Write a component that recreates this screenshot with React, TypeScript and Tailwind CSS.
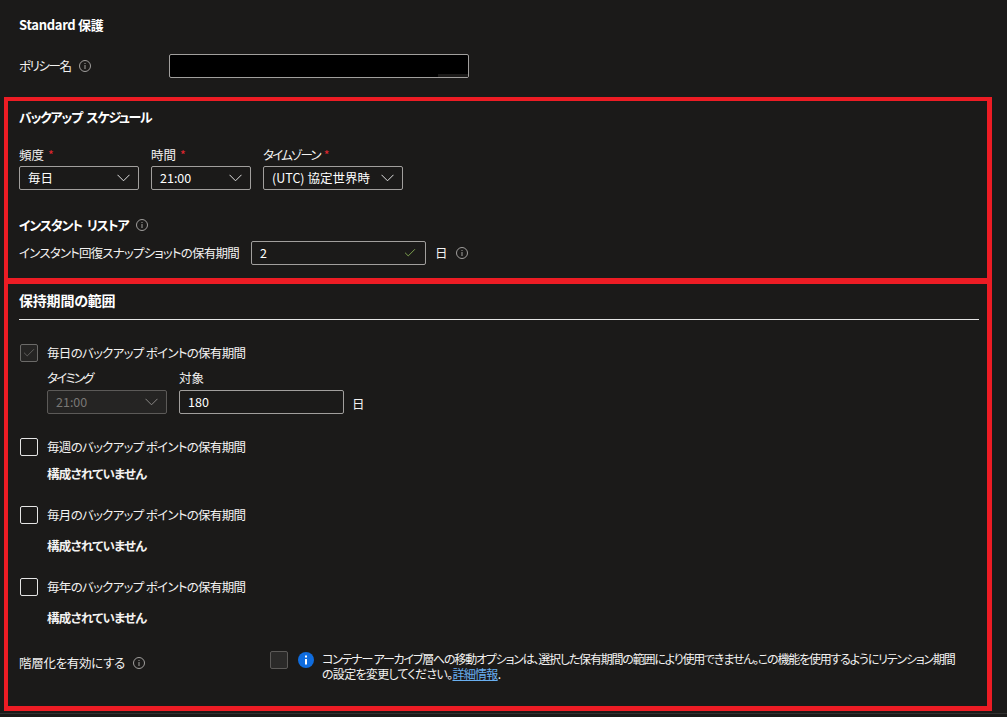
import { Check } from "lucide-react";
import type { ReactNode } from "react";

const InfoIcon = () => (
  <svg width="12" height="12" viewBox="0 0 12 12" fill="none" className="shrink-0 text-[#a19f9d]">
    <circle cx="6" cy="6" r="5.5" stroke="currentColor" />
    <rect x="5.5" y="5" width="1" height="4" fill="currentColor" />
    <rect x="5.5" y="3" width="1" height="1" fill="currentColor" />
  </svg>
);

const Chevron = ({ disabled }: { disabled?: boolean }) => (
  <svg width="13" height="8" viewBox="0 0 13 8" fill="none" className={disabled ? "text-[#8a8886]" : "text-[#e0e0e0]"}>
    <path d="M0.5 0.8 L6.5 6.8 L12.5 0.8" stroke="currentColor" />
  </svg>
);

const Req = () => <span className="ml-1 tracking-normal text-[#e0262f]">*</span>;

const Select = ({ value, width, disabled }: { value: string; width: string; disabled?: boolean }) => (
  <div
    className={`flex h-6 items-center justify-between rounded-[2px] border pr-[8px] pl-2 ${width} ${
      disabled ? "border-[#5c5a58] bg-[#252423] text-[#797775]" : "border-[#a19f9d] text-white"
    }`}
  >
    <span className="whitespace-nowrap">{value}</span>
    <Chevron disabled={disabled} />
  </div>
);

const Title = ({ children, className }: { children: ReactNode; className: string }) => (
  <h2 className={`leading-5 font-bold whitespace-nowrap text-white ${className}`}>{children}</h2>
);

const RetentionRow = ({ label, gap }: { label: string; gap: string }) => (
  <div className="mt-6">
    <div className="ml-[1px] flex items-center gap-[9px]">
      <div className="h-[18px] w-[18px] rounded-[2px] border border-[#e5e5e5]" />
      <span className="tracking-[-0.7px]">{label}</span>
    </div>
    <p className={`ml-[28px] leading-4 font-bold tracking-[-0.7px] ${gap}`}>構成されていません</p>
  </div>
);

export default function App() {
  return (
    <div className="h-[717px] w-[1007px] overflow-hidden bg-[#1b1a19] text-[12.5px] leading-4 text-[#f3f2f1] [font-family:'Noto_Sans_CJK_JP','Noto_Sans',sans-serif] [font-feature-settings:'palt']">
      <div className="px-[19px] pt-[15px]">
        <Title className="text-[13px] tracking-[-0.3px]">Standard 保護</Title>
        <div className="mt-[19px] flex items-center">
          <div className="flex w-[150px] items-center gap-2">
            <span className="tracking-[-1.4px]">ポリシー名</span>
            <InfoIcon />
          </div>
          <div className="relative h-6 w-[300px] rounded-[2px] border border-[#a19f9d] bg-black">
            <div className="absolute right-0 bottom-0 h-[3px] w-[30px] bg-[#1b1a19]" />
          </div>
        </div>
      </div>

      <section className="mt-[19px] ml-1 h-[187px] w-[988px] border-t-[4px] border-r-[5px] border-b-[6px] border-l-[4px] border-[#ed1c24] pt-[6px] pl-[11px]">
        <Title className="text-[13px] tracking-[-1.3px] [word-spacing:3px]">バックアップ スケジュール</Title>
        <div className="mt-5 flex gap-3">
          <div>
            <div className="mb-[3px]">頻度<Req /></div>
            <Select value="毎日" width="w-[120px]" />
          </div>
          <div>
            <div className="mb-[3px]">時間<Req /></div>
            <Select value="21:00" width="w-[100px]" />
          </div>
          <div>
            <div className="mb-[3px] tracking-[-1.8px]">タイムゾーン<Req /></div>
            <Select value="(UTC) 協定世界時" width="w-[140px]" />
          </div>
        </div>
        <div className="mt-[25px] flex items-center gap-2">
          <Title className="text-[13px] tracking-[-1.2px] [word-spacing:3px]">インスタント リストア</Title>
          <InfoIcon />
        </div>
        <div className="mt-[6px] flex items-center">
          <span className="w-[232px] tracking-[-0.8px] whitespace-nowrap">インスタント回復スナップショットの保有期間</span>
          <div className="flex h-6 w-[175px] items-center justify-between rounded-[2px] border border-[#a19f9d] px-2 text-white">
            <span>2</span>
            <Check size={14} strokeWidth={1.5} className="text-[#8cb356]" />
          </div>
          <span className="ml-[9px]">日</span>
          <span className="ml-2"><InfoIcon /></span>
        </div>
      </section>

      <section className="ml-1 h-[427px] w-[988px] border-t-0 border-r-[5px] border-b-[5px] border-l-[4px] border-[#ed1c24] pt-[6px] pr-2 pl-[11px]">
        <Title className="text-[14px] tracking-[-0.2px]">保持期間の範囲</Title>
        <div className="mt-[9px] h-px w-full bg-[#e5e5e5]" />

        <div className="mt-6 ml-[1px] flex items-center gap-[9px]">
          <div className="flex h-[18px] w-[18px] items-center justify-center rounded-[2px] border border-[#6b6a68] bg-[#252423]">
            <Check size={14} strokeWidth={1} className="text-[#8a8886]" />
          </div>
          <span className="tracking-[-0.7px]">毎日のバックアップ ポイントの保有期間</span>
        </div>
        <div className="mt-2 ml-[28px] flex gap-3">
          <div>
            <div className="mb-1 tracking-[-1.8px]">タイミング</div>
            <Select value="21:00" width="w-[120px]" disabled />
          </div>
          <div>
            <div className="mb-1">対象</div>
            <div className="flex h-6 w-[165px] items-center rounded-[2px] border border-[#a19f9d] px-2 text-white">180</div>
          </div>
          <span className="mt-[26px] -ml-[4px]">日</span>
        </div>

        <RetentionRow label="毎週のバックアップ ポイントの保有期間" gap="mt-[10px]" />
        <RetentionRow label="毎月のバックアップ ポイントの保有期間" gap="mt-[14px]" />
        <RetentionRow label="毎年のバックアップ ポイントの保有期間" gap="mt-[14px]" />

        <div className="mt-[25px] flex">
          <div className="flex w-[251px] items-center gap-2 self-start pt-1">
            <span className="tracking-[-0.3px]">階層化を有効にする</span>
            <InfoIcon />
          </div>
          <div className="h-[18px] w-[18px] shrink-0 rounded-[2px] border border-[#5c5a58] bg-[#2b2a29]" />
          <svg width="16" height="16" viewBox="0 0 16 16" className="mt-[1px] ml-[10px] shrink-0">
            <circle cx="8" cy="8" r="8" fill="#0f6cde" />
            <rect x="7" y="7" width="2" height="5.5" fill="#fff" />
            <rect x="7" y="3.5" width="2" height="2" fill="#fff" />
          </svg>
          <div className="ml-2 text-[12px] leading-[15px] whitespace-nowrap">
            <p className="tracking-[-1.2px]">
              コンテナー アーカイブ層への移動オプションは、選択した保有期間の範囲により使用できません。この機能を使用するようにリテンション期間
            </p>
            <p className="tracking-[-0.7px]">
              の設定を変更してください。<a className="text-[#69aff0] underline">詳細情報</a>.
            </p>
          </div>
        </div>
      </section>
      <div className="mt-[2px] h-px w-full bg-[#323130]" />
    </div>
  );
}
